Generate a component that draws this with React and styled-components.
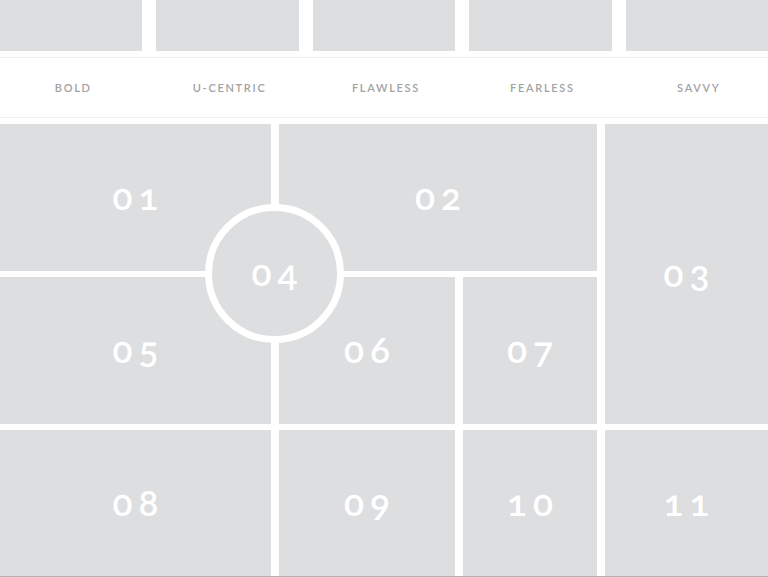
import React from "react";
import styled, { createGlobalStyle } from "styled-components";

const Global = createGlobalStyle`
  html, body { margin: 0; padding: 0; background: #fff; }
  body { font-family: Lato, "Open Sans", sans-serif; overflow: hidden; }
`;

const Page = styled.div`
  width: 768px;
  height: 577px;
  overflow: hidden;
`;

const Strip = styled.div`
  display: grid;
  grid-template-columns: repeat(5, 1fr);
  column-gap: 14px;
  height: 51px;
`;

const Thumb = styled.div`
  background: #dddedf;
`;

const Labels = styled.div`
  display: grid;
  grid-template-columns: repeat(5, 1fr);
  column-gap: 14px;
  margin-top: 6px;
  height: 59px;
  border-top: 1px solid #eeeeee;
  border-bottom: 1px solid #eeeeee;
  align-items: center;
`;

const Label = styled.div`
  text-align: center;
  font-family: Lato, "Open Sans", sans-serif;
  font-size: 11px;
  font-weight: 600;
  letter-spacing: 1.7px;
  color: #a2a2a2;
  padding-bottom: 1px;
  padding-left: 4px;
`;

const GridWrap = styled.div`
  position: relative;
  margin-top: 6px;
  border-bottom: 1px solid #b3b3b3;
`;

const Grid = styled.div`
  display: grid;
  grid-template-columns: 271px 176px 134px 163px;
  grid-template-rows: 147px 147px 146px;
  column-gap: 8px;
  row-gap: 6px;
`;

const Tile = styled.div`
  background: #dddedf;
  display: flex;
  align-items: center;
  justify-content: center;
  grid-column: ${(p) => p.$col};
  grid-row: ${(p) => p.$row};
`;

const Num = styled.span`
  font-family: Lato, "Open Sans", sans-serif;
  font-size: 37px;
  font-weight: 600;
  letter-spacing: 6px;
  margin-right: -6px;
  padding-bottom: 4px;
  color: #ffffff;
  font-variant-numeric: oldstyle-nums;
  font-feature-settings: "onum" 1;
  line-height: 1;
`;

const Circle = styled.div`
  position: absolute;
  left: 205px;
  top: 80px;
  width: 125px;
  height: 125px;
  border: 7px solid #ffffff;
  border-radius: 50%;
  background: #dddedf;
  display: flex;
  align-items: center;
  justify-content: center;
`;

const labels = ["BOLD", "U-CENTRIC", "FLAWLESS", "FEARLESS", "SAVVY"];

const tiles = [
  { n: "01", col: "1", row: "1" },
  { n: "02", col: "2 / span 2", row: "1" },
  { n: "03", col: "4", row: "1 / span 2" },
  { n: "05", col: "1", row: "2" },
  { n: "06", col: "2", row: "2" },
  { n: "07", col: "3", row: "2" },
  { n: "08", col: "1", row: "3" },
  { n: "09", col: "2", row: "3" },
  { n: "10", col: "3", row: "3" },
  { n: "11", col: "4", row: "3" },
];

export default function App() {
  return (
    <Page>
      <Global />
      <Strip>
        {labels.map((l) => (
          <Thumb key={l} />
        ))}
      </Strip>
      <Labels>
        {labels.map((l) => (
          <Label key={l}>{l}</Label>
        ))}
      </Labels>
      <GridWrap>
        <Grid>
          {tiles.map((t) => (
            <Tile key={t.n} $col={t.col} $row={t.row}>
              <Num>{t.n}</Num>
            </Tile>
          ))}
        </Grid>
        <Circle>
          <Num>04</Num>
        </Circle>
      </GridWrap>
    </Page>
  );
}
